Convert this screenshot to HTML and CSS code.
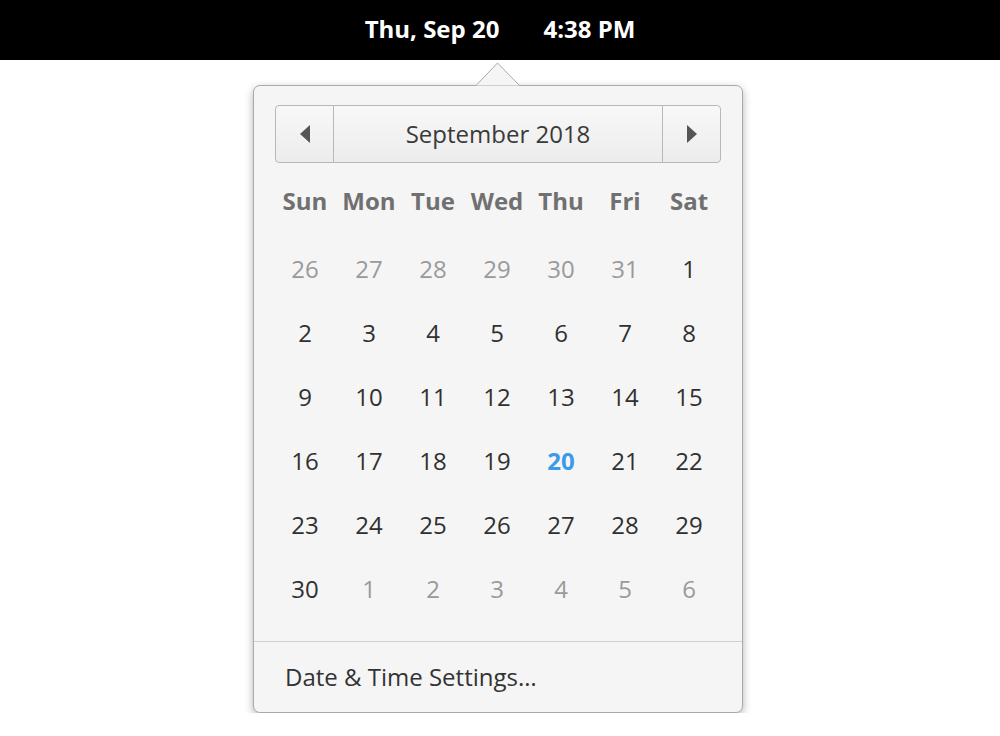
FILE: index.html
```html
<!DOCTYPE html>
<html>
<head>
<meta charset="utf-8">
<link rel="stylesheet" href="styles.css">
</head>
<body>
<div class="topbar">
  <span class="clock-date">Thu, Sep 20</span>
  <span class="clock-time">4:38 PM</span>
</div>
<div class="popover">
  <svg class="arrow" width="46" height="24" viewBox="0 0 46 24">
    <polygon points="0.5,24 22.5,1 45,24" fill="#f5f5f5" stroke="#a9a9a9" stroke-width="1"/>
  </svg>
  <div class="month-nav">
    <div class="nav-btn prev">
      <svg width="12" height="20" viewBox="0 0 12 20"><polygon points="11,1 11,19 1,10" fill="#555"/></svg>
    </div>
    <div class="month-label">September 2018</div>
    <div class="nav-btn next">
      <svg width="12" height="20" viewBox="0 0 12 20"><polygon points="1,1 1,19 11,10" fill="#555"/></svg>
    </div>
  </div>
  <div class="weekdays">
    <span>Sun</span><span>Mon</span><span>Tue</span><span>Wed</span><span>Thu</span><span>Fri</span><span>Sat</span>
  </div>
  <div class="days">
    <span class="other">26</span><span class="other">27</span><span class="other">28</span><span class="other">29</span><span class="other">30</span><span class="other">31</span><span>1</span>
    <span>2</span><span>3</span><span>4</span><span>5</span><span>6</span><span>7</span><span>8</span>
    <span>9</span><span>10</span><span>11</span><span>12</span><span>13</span><span>14</span><span>15</span>
    <span>16</span><span>17</span><span>18</span><span>19</span><span class="today">20</span><span>21</span><span>22</span>
    <span>23</span><span>24</span><span>25</span><span>26</span><span>27</span><span>28</span><span>29</span>
    <span>30</span><span class="other">1</span><span class="other">2</span><span class="other">3</span><span class="other">4</span><span class="other">5</span><span class="other">6</span>
  </div>
  <div class="footer">Date &amp; Time Settings…</div>
</div>
</body>
</html>
```
FILE: styles.css
```css
html, body {
  margin: 0;
  padding: 0;
  background: #ffffff;
  font-family: "Open Sans", "Noto Sans", sans-serif;
}

.topbar {
  height: 60px;
  background: #000000;
  color: #ffffff;
  font-weight: 700;
  font-size: 24px;
  display: flex;
  justify-content: center;
  align-items: center;
  gap: 44px;
  padding: 0 0 3px 0;
  box-sizing: border-box;
}

.popover {
  position: relative;
  width: 490px;
  box-sizing: border-box;
  margin: 25px 0 0 253px;
  padding-top: 19px;
  background: #f5f5f5;
  border: 1px solid #a9a9a9;
  border-radius: 7px;
  box-shadow: 0 3px 9px rgba(0, 0, 0, 0.3);
}

.arrow {
  position: absolute;
  top: -24px;
  left: 221px;
  display: block;
}

.month-nav {
  display: flex;
  height: 58px;
  margin: 0 21px;
  box-sizing: border-box;
  border: 1px solid #b8b8b8;
  border-radius: 4px;
  background: linear-gradient(#f8f8f8, #ececec);
  color: #3a3a3a;
}

.nav-btn {
  width: 57px;
  display: flex;
  align-items: center;
  justify-content: center;
}

.nav-btn svg {
  display: block;
}

.prev {
  border-right: 1px solid #b8b8b8;
}

.next {
  border-left: 1px solid #b8b8b8;
}

.month-label {
  flex: 1;
  display: flex;
  align-items: center;
  justify-content: center;
  padding-bottom: 2px;
  font-size: 24px;
}

.weekdays,
.days {
  display: grid;
  grid-template-columns: repeat(7, 64px);
  margin-left: 19px;
  text-align: center;
}

.weekdays {
  margin-top: 18px;
  height: 40px;
  line-height: 40px;
  font-size: 24px;
  font-weight: 700;
  color: #707070;
}

.days {
  margin-top: 16px;
  padding-bottom: 20px;
  grid-auto-rows: 64px;
  line-height: 64px;
  font-size: 24px;
  color: #303030;
}

.days .other {
  color: #9a9a9a;
}

.days .today {
  color: #3d9ae8;
  font-weight: 700;
}

.footer {
  border-top: 1px solid #cfcfcf;
  padding: 19px 31px;
  line-height: 32px;
  font-size: 24px;
  color: #333333;
}
```
